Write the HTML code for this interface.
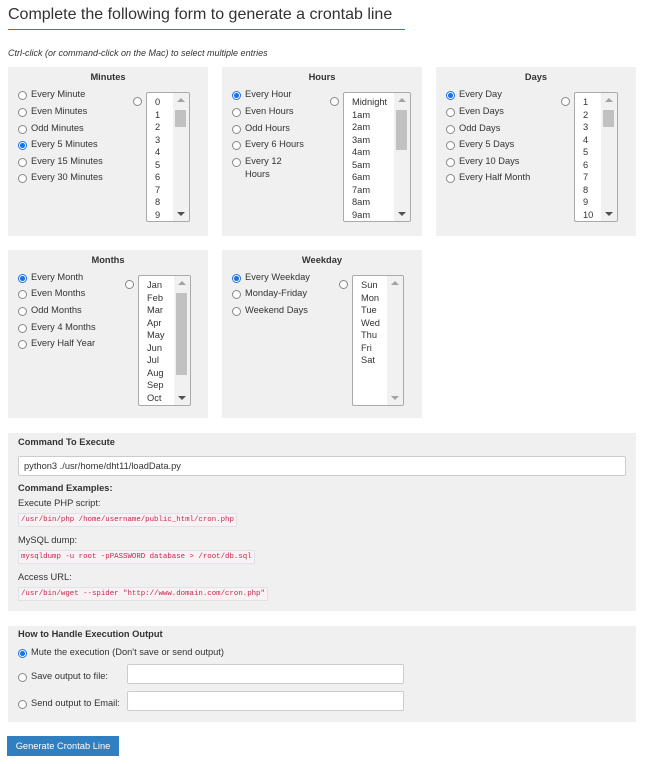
<!DOCTYPE html>
<html><head><style>
*{box-sizing:border-box;margin:0;padding:0}
body{width:647px;height:764px;background:#fff;font-family:"Liberation Sans",Arial,sans-serif;color:#333;position:relative;overflow:hidden;font-size:9.3px}
.a{position:absolute}
.p{position:absolute;background:#f0f0f0}
.h{position:absolute;left:0;right:0;text-align:center;font-weight:bold;font-size:9.3px;top:5px}
.r{position:absolute;width:9px;height:9px;border:1px solid #888;border-radius:50%;background:#fff}
.r.on{border-color:#1a73e8;background:radial-gradient(circle,#1a73e8 0 2.3px,#fff 2.8px)}
.l{position:absolute;font-size:9.3px;white-space:nowrap}
.lb{position:absolute;border:1px solid #aaa;border-radius:2px;background:#fff;overflow:hidden}
.lb .it{position:absolute;left:8px;font-size:9.3px;line-height:12.5px;top:3px}
.sb{position:absolute;right:0;top:0;bottom:0;width:16px;background:#f1f1f1}
.th{position:absolute;left:2px;width:11px;background:#c1c1c1}
.up,.dn{position:absolute;left:4px;width:0;height:0;border-left:4px solid transparent;border-right:4px solid transparent}
.up{top:5px;border-bottom:4px solid #a3a3a3}
.dn{bottom:5px;border-top:4px solid #505050}
code{font-family:"Liberation Mono",monospace;font-size:7.4px;color:#c7254e;background:#f9f2f4;border:1px solid #e1e1e8;padding:2px 2px;position:absolute;white-space:nowrap}
input{position:absolute;border:1px solid #ccc;border-radius:2px;background:#fff;font-family:inherit;font-size:9.3px;padding-left:5px;color:#333}
</style></head><body>
<div class="a" style="left:8px;top:6px;font-size:16px;color:#333">Complete the following form to generate a crontab line</div>
<div class="a" style="left:8px;top:29px;width:397px;height:1px;background:#2f7fc1"></div>
<div class="a" style="left:8px;top:48px;font-style:italic;font-size:9px">Ctrl-click (or command-click on the Mac) to select multiple entries</div>

<!-- Minutes -->
<div class="p" style="left:8px;top:67px;width:200px;height:169px">
<div class="h">Minutes</div>
<div class="r" style="left:10px;top:24px"></div><div class="l" style="left:23px;top:22px">Every Minute</div>
<div class="r" style="left:10px;top:41px"></div><div class="l" style="left:23px;top:39px">Even Minutes</div>
<div class="r" style="left:10px;top:58px"></div><div class="l" style="left:23px;top:56px">Odd Minutes</div>
<div class="r on" style="left:10px;top:74px"></div><div class="l" style="left:23px;top:72px">Every 5 Minutes</div>
<div class="r" style="left:10px;top:91px"></div><div class="l" style="left:23px;top:89px">Every 15 Minutes</div>
<div class="r" style="left:10px;top:107px"></div><div class="l" style="left:23px;top:105px">Every 30 Minutes</div>
<div class="r" style="left:125px;top:30px"></div>
<div class="lb" style="left:138px;top:25px;width:44px;height:130px">
<div class="it">0<br>1<br>2<br>3<br>4<br>5<br>6<br>7<br>8<br>9<br>10</div>
<div class="sb"><div class="up"></div><div class="th" style="top:17px;height:17px"></div><div class="dn"></div></div></div>
</div>

<!-- Hours -->
<div class="p" style="left:222px;top:67px;width:200px;height:169px">
<div class="h">Hours</div>
<div class="r on" style="left:10px;top:24px"></div><div class="l" style="left:23px;top:22px">Every Hour</div>
<div class="r" style="left:10px;top:41px"></div><div class="l" style="left:23px;top:39px">Even Hours</div>
<div class="r" style="left:10px;top:58px"></div><div class="l" style="left:23px;top:56px">Odd Hours</div>
<div class="r" style="left:10px;top:74px"></div><div class="l" style="left:23px;top:72px">Every 6 Hours</div>
<div class="r" style="left:10px;top:91px"></div><div class="l" style="left:23px;top:88px;line-height:13px">Every 12<br>Hours</div>
<div class="r" style="left:108px;top:30px"></div>
<div class="lb" style="left:121px;top:25px;width:68px;height:130px">
<div class="it">Midnight<br>1am<br>2am<br>3am<br>4am<br>5am<br>6am<br>7am<br>8am<br>9am<br>10am</div>
<div class="sb"><div class="up"></div><div class="th" style="top:17px;height:40px"></div><div class="dn"></div></div></div>
</div>

<!-- Days -->
<div class="p" style="left:436px;top:67px;width:200px;height:169px">
<div class="h">Days</div>
<div class="r on" style="left:10px;top:24px"></div><div class="l" style="left:23px;top:22px">Every Day</div>
<div class="r" style="left:10px;top:41px"></div><div class="l" style="left:23px;top:39px">Even Days</div>
<div class="r" style="left:10px;top:58px"></div><div class="l" style="left:23px;top:56px">Odd Days</div>
<div class="r" style="left:10px;top:74px"></div><div class="l" style="left:23px;top:72px">Every 5 Days</div>
<div class="r" style="left:10px;top:91px"></div><div class="l" style="left:23px;top:89px">Every 10 Days</div>
<div class="r" style="left:10px;top:107px"></div><div class="l" style="left:23px;top:105px">Every Half Month</div>
<div class="r" style="left:125px;top:30px"></div>
<div class="lb" style="left:138px;top:25px;width:44px;height:130px">
<div class="it">1<br>2<br>3<br>4<br>5<br>6<br>7<br>8<br>9<br>10<br>11</div>
<div class="sb"><div class="up"></div><div class="th" style="top:17px;height:17px"></div><div class="dn"></div></div></div>
</div>

<!-- Months -->
<div class="p" style="left:8px;top:250px;width:200px;height:168px">
<div class="h">Months</div>
<div class="r on" style="left:10px;top:24px"></div><div class="l" style="left:23px;top:22px">Every Month</div>
<div class="r" style="left:10px;top:40px"></div><div class="l" style="left:23px;top:38px">Even Months</div>
<div class="r" style="left:10px;top:57px"></div><div class="l" style="left:23px;top:55px">Odd Months</div>
<div class="r" style="left:10px;top:74px"></div><div class="l" style="left:23px;top:72px">Every 4 Months</div>
<div class="r" style="left:10px;top:90px"></div><div class="l" style="left:23px;top:88px">Every Half Year</div>
<div class="r" style="left:117px;top:30px"></div>
<div class="lb" style="left:130px;top:25px;width:53px;height:131px">
<div class="it">Jan<br>Feb<br>Mar<br>Apr<br>May<br>Jun<br>Jul<br>Aug<br>Sep<br>Oct<br>Nov</div>
<div class="sb"><div class="up"></div><div class="th" style="top:17px;height:82px"></div><div class="dn"></div></div></div>
</div>

<!-- Weekday -->
<div class="p" style="left:222px;top:250px;width:200px;height:168px">
<div class="h">Weekday</div>
<div class="r on" style="left:10px;top:24px"></div><div class="l" style="left:23px;top:22px">Every Weekday</div>
<div class="r" style="left:10px;top:40px"></div><div class="l" style="left:23px;top:38px">Monday-Friday</div>
<div class="r" style="left:10px;top:57px"></div><div class="l" style="left:23px;top:55px">Weekend Days</div>
<div class="r" style="left:117px;top:30px"></div>
<div class="lb" style="left:130px;top:25px;width:52px;height:131px">
<div class="it">Sun<br>Mon<br>Tue<br>Wed<br>Thu<br>Fri<br>Sat</div>
<div class="sb"><div class="up"></div><div class="dn" style="border-top-color:#a3a3a3"></div></div></div>
</div>

<!-- Command -->
<div class="p" style="left:8px;top:433px;width:628px;height:178px">
<div class="l" style="left:10px;top:4px;font-weight:bold">Command To Execute</div>
<input style="left:10px;top:23px;width:608px;height:20px" value="python3 ./usr/home/dht11/loadData.py">
<div class="l" style="left:10px;top:50px;font-weight:bold">Command Examples:</div>
<div class="l" style="left:10px;top:65px">Execute PHP script:</div>
<code style="left:10px;top:80px">/usr/bin/php /home/username/public_html/cron.php</code>
<div class="l" style="left:10px;top:102px">MySQL dump:</div>
<code style="left:10px;top:117px">mysqldump -u root -pPASSWORD database &gt; /root/db.sql</code>
<div class="l" style="left:10px;top:139px">Access URL:</div>
<code style="left:10px;top:154px">/usr/bin/wget --spider "http://www.domain.com/cron.php"</code>
</div>

<!-- Output -->
<div class="p" style="left:8px;top:626px;width:628px;height:96px">
<div class="l" style="left:10px;top:3px;font-weight:bold">How to Handle Execution Output</div>
<div class="r on" style="left:10px;top:23px"></div><div class="l" style="left:23px;top:21px">Mute the execution (Don't save or send output)</div>
<div class="r" style="left:10px;top:47px"></div><div class="l" style="left:23px;top:45px">Save output to file:</div>
<input style="left:119px;top:38px;width:277px;height:20px">
<div class="r" style="left:10px;top:74px"></div><div class="l" style="left:23px;top:72px">Send output to Email:</div>
<input style="left:119px;top:65px;width:277px;height:20px">
</div>

<div class="a" style="left:7px;top:736px;width:112px;height:20px;background:#2f7fc1;color:#fff;font-size:9.3px;text-align:center;line-height:20px">Generate Crontab Line</div>
</body></html>
